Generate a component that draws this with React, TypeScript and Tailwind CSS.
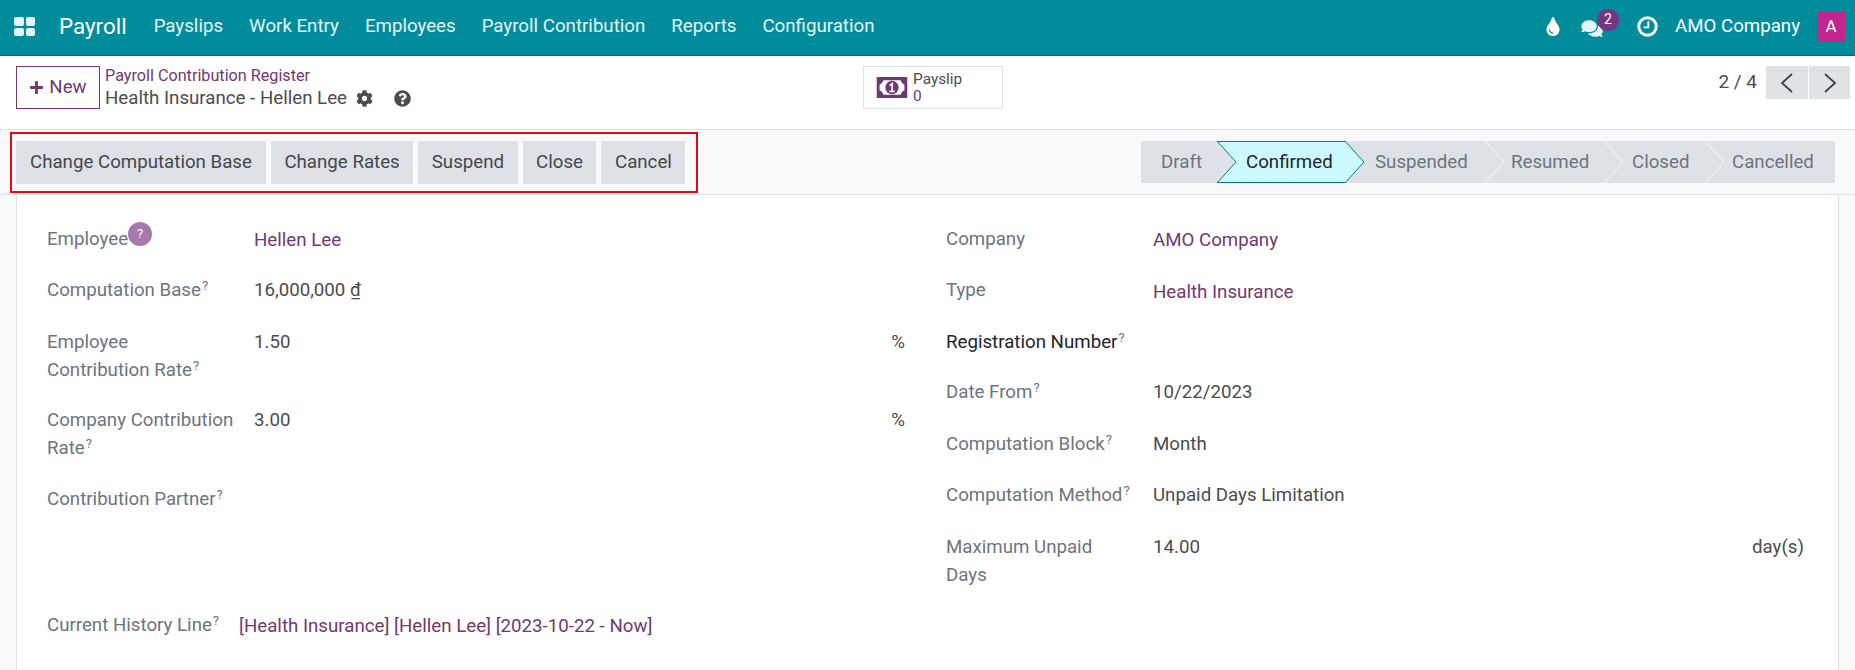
import { FaCog, FaComments, FaPlus, FaQuestionCircle, FaTint } from "react-icons/fa";

const menu = ["Payslips", "Work Entry", "Employees", "Payroll Contribution", "Reports", "Configuration"];
const actions = ["Change Computation Base", "Change Rates", "Suspend", "Close", "Cancel"];
const steps = [
  { label: "Draft", width: "w-[76px]", pad: "pl-[20px]" },
  { label: "Confirmed", width: "w-[129px]", pad: "pl-[29px]", active: true },
  { label: "Suspended", width: "w-[139px]", pad: "pl-[29px]" },
  { label: "Resumed", width: "w-[119px]", pad: "pl-[26px]" },
  { label: "Closed", width: "w-[101px]", pad: "pl-[28px]" },
  { label: "Cancelled", width: "w-[130px]", pad: "pl-[27px]" },
];

function Hint() {
  return <sup className="ml-[1px] text-[13px] text-[#6c757d]">?</sup>;
}

function MoneyIcon() {
  return (
    <svg viewBox="0 0 32 22" className="h-[21px] w-[32px]">
      <path
        fill="#71396f"
        fillRule="evenodd"
        d="M0 0h32v22H0zM7 3.500Q6 7 3 8v6q3 1 4 4.500h18q1-3.500 4-4.500V8q-3-1-4-4.500z"
      />
      <circle cx="16" cy="11" r="7" fill="#71396f" />
      <path fill="none" stroke="#fff" strokeWidth="1.800" d="M13.500 9l2.700-2V15M13.300 15h5.400" />
    </svg>
  );
}

function ClockIcon() {
  return (
    <svg viewBox="0 0 24 24" className="h-[21px] w-[21px]" fill="none" stroke="currentColor">
      <circle cx="12" cy="12" r="10" strokeWidth="3.400" />
      <path d="M13 6v7H7.500" strokeWidth="2.200" />
    </svg>
  );
}

function Chevron({ d }: { d: string }) {
  return (
    <svg viewBox="0 0 14 20" className="h-[20px] w-[14px]" fill="none" stroke="#3f4347" strokeWidth="1.800">
      <path d={d} />
    </svg>
  );
}

function StatusStep({ label, width, pad, active, last }: { label: string; width: string; pad: string; active?: boolean; last: boolean }) {
  return (
    <div
      className={`relative flex h-[42px] items-center ${width} ${pad} ${
        active ? "border-y border-r border-[#017e84] bg-[#ccf8ff] text-[#212529]" : "bg-[#dee2e6] text-[#6c757d]"
      }`}
    >
      {label}
      {!last && (
        <svg
          viewBox="0 0 20 42"
          className={`absolute left-full z-10 h-[42px] w-[20px] ${active ? "top-[-1px]" : "top-0"}`}
          preserveAspectRatio="none"
        >
          <path
            d="M0 0L19 21L0 42"
            fill={active ? "#ccf8ff" : "#dee2e6"}
            stroke={active || label === "Draft" ? "#017e84" : "#f8f9fa"}
            strokeWidth="1"
          />
        </svg>
      )}
    </div>
  );
}

function Field({ label, children, labelClass = "text-[#6c757d]", height }: { label: React.ReactNode; children?: React.ReactNode; labelClass?: string; height: string }) {
  return (
    <div className={`flex leading-[28px] ${height}`}>
      <div className={`w-[207px] shrink-0 ${labelClass}`}>{label}</div>
      <div className="min-w-0 flex-1">{children}</div>
    </div>
  );
}

export default function App() {
  return (
    <div className="h-[670px] overflow-hidden bg-[#f8f9fa] font-['Roboto',sans-serif] text-[18.700px] text-[#4c4c4c]">
      <header className="flex h-[56px] items-center border-b border-[#00666f] bg-[#018c9c] pb-[2px] text-[#ffffff]">
        <div className="ml-[14px] grid h-[19px] w-[21px] grid-cols-2 gap-[2px]">
          <span className="rounded-[2px] bg-white/90" />
          <span className="rounded-[2px] bg-white/90" />
          <span className="rounded-[2px] bg-white/90" />
          <span className="rounded-[2px] bg-white/90" />
        </div>
        <div className="ml-[24px] text-[22.400px]">Payroll</div>
        <nav className="ml-[27px] flex gap-[26px] text-[18.700px] text-white/90">
          {menu.map((item) => (
            <span key={item}>{item}</span>
          ))}
        </nav>
        <div className="ml-auto flex items-center pr-[10px]">
          <FaTint className="h-[19px] w-[14px]" />
          <div className="relative ml-[21px] mr-[34px] mt-[3px]">
            <FaComments className="h-[19px] w-[22px] text-[#e6f3f4]" />
            <span className="absolute top-[-10px] left-[16px] flex h-[22px] w-[22px] items-center justify-center rounded-full bg-[#75367f] text-[14px]">2</span>
          </div>
          <ClockIcon />
          <span className="ml-[17px]">AMO Company</span>
          <span className="ml-[17px] flex h-[31px] w-[28px] items-center justify-center rounded-[3px] bg-[#c0268e] text-[17px]">A</span>
        </div>
      </header>

      <div className="flex h-[74px] border-b border-[#dee2e6] bg-white px-[16px] pt-[10px]">
        <div className="flex w-[847px] shrink-0">
          <button className="flex h-[43px] w-[84px] items-center justify-center gap-[5px] border border-[#71396f] text-[#71396f]">
            <FaPlus className="h-[15px] w-[15px]" />
            New
          </button>
          <div className="ml-[5px] mt-[-1px] leading-[22px]">
            <div className="text-[16.200px] text-[#71396f]">Payroll Contribution Register</div>
            <div className="flex items-center">
              Health Insurance - Hellen Lee
              <FaCog className="ml-[9px] h-[17px] w-[17px]" />
              <FaQuestionCircle className="ml-[21px] h-[17px] w-[17px]" />
            </div>
          </div>
        </div>
        <div className="flex h-[43px] w-[140px] items-center border border-[#dee2e6] pl-[12px]">
          <MoneyIcon />
          <div className="ml-[5px] text-[15.400px] leading-[17px]">
            <div>Payslip</div>
            <div className="text-[#71396f]">0</div>
          </div>
        </div>
        <div className="ml-auto mr-[-11px] flex h-[33px] items-center">
          <span className="mr-[9px] text-[19px]">2 / 4</span>
          <div className="flex gap-[1px]">
            <span className="flex h-[33px] w-[42px] items-center justify-center bg-[#e0e3e6]">
              <Chevron d="M12 1L2 10L12 19" />
            </span>
            <span className="flex h-[33px] w-[41px] items-center justify-center bg-[#e0e3e6]">
              <Chevron d="M2 1L12 10L2 19" />
            </span>
          </div>
        </div>
      </div>

      <div className="flex h-[65px] items-center justify-between border-b border-[#dee2e6] pl-[10px] pr-[20px]">
        <div className="flex h-[61px] items-center gap-[5px] border-2 border-[#e30613] pl-[4px] pr-[11px]">
          {actions.map((action, i) => (
            <button key={action} className={`h-[43px] bg-[#dee2e6] text-[#43484d] ${i === 0 ? "px-[14px]" : "px-[13.500px]"}`}>
              {action}
            </button>
          ))}
        </div>
        <div className="flex">
          {steps.map((step, i) => (
            <StatusStep key={step.label} {...step} last={i === steps.length - 1} />
          ))}
        </div>
      </div>

      <main className="mx-[16px] flex h-[475px] border-x border-[#dee2e6] bg-white">
        <div className="w-[899px] shrink-0 pl-[30px] pr-[11px] pt-[30px]">
          <Field
            label={
              <span className="relative">
                Employee
                <span className="absolute top-[-6px] left-full flex h-[24px] w-[24px] items-center justify-center rounded-full bg-[#a57aaa] text-[13px] text-white">?</span>
              </span>
            }
            height="h-[51px]"
          >
            <span className="block pt-[1px] text-[#71396f]">Hellen Lee</span>
          </Field>
          <Field label={<>Computation Base<Hint /></>} height="h-[52px]">
            16,000,000 <span className="underline">₫</span>
          </Field>
          <Field label={<>Employee<br />Contribution Rate<Hint /></>} height="h-[78px]">
            <div className="flex justify-between">
              <span>1.50</span>
              <span>%</span>
            </div>
          </Field>
          <Field label={<>Company Contribution<br />Rate<Hint /></>} height="h-[79px]">
            <div className="flex justify-between">
              <span>3.00</span>
              <span>%</span>
            </div>
          </Field>
          <Field label={<>Contribution Partner<Hint /></>} height="h-[126px]" />
          <div className="flex leading-[28px]">
            <div className="w-[192px] shrink-0 text-[#6c757d]">Current History Line<Hint /></div>
            <span className="pt-[1px] text-[#71396f]">[Health Insurance] [Hellen Lee] [2023-10-22 - Now]</span>
          </div>
        </div>
        <div className="flex-1 pl-[30px] pr-[34px] pt-[30px]">
          <Field label="Company" height="h-[51px]">
            <span className="block pt-[1px] text-[#71396f]">AMO Company</span>
          </Field>
          <Field label="Type" height="h-[52px]">
            <span className="block pt-[2px] text-[#71396f]">Health Insurance</span>
          </Field>
          <Field label={<>Registration Number<Hint /></>} labelClass="text-[#212529]" height="h-[50px]" />
          <Field label={<>Date From<Hint /></>} height="h-[52px]">10/22/2023</Field>
          <Field label={<>Computation Block<Hint /></>} height="h-[51px]">Month</Field>
          <Field label={<>Computation Method<Hint /></>} height="h-[52px]">Unpaid Days Limitation</Field>
          <Field label={<>Maximum Unpaid<br />Days</>} height="h-[56px]">
            <div className="flex justify-between">
              <span>14.00</span>
              <span>day(s)</span>
            </div>
          </Field>
        </div>
      </main>
    </div>
  );
}
